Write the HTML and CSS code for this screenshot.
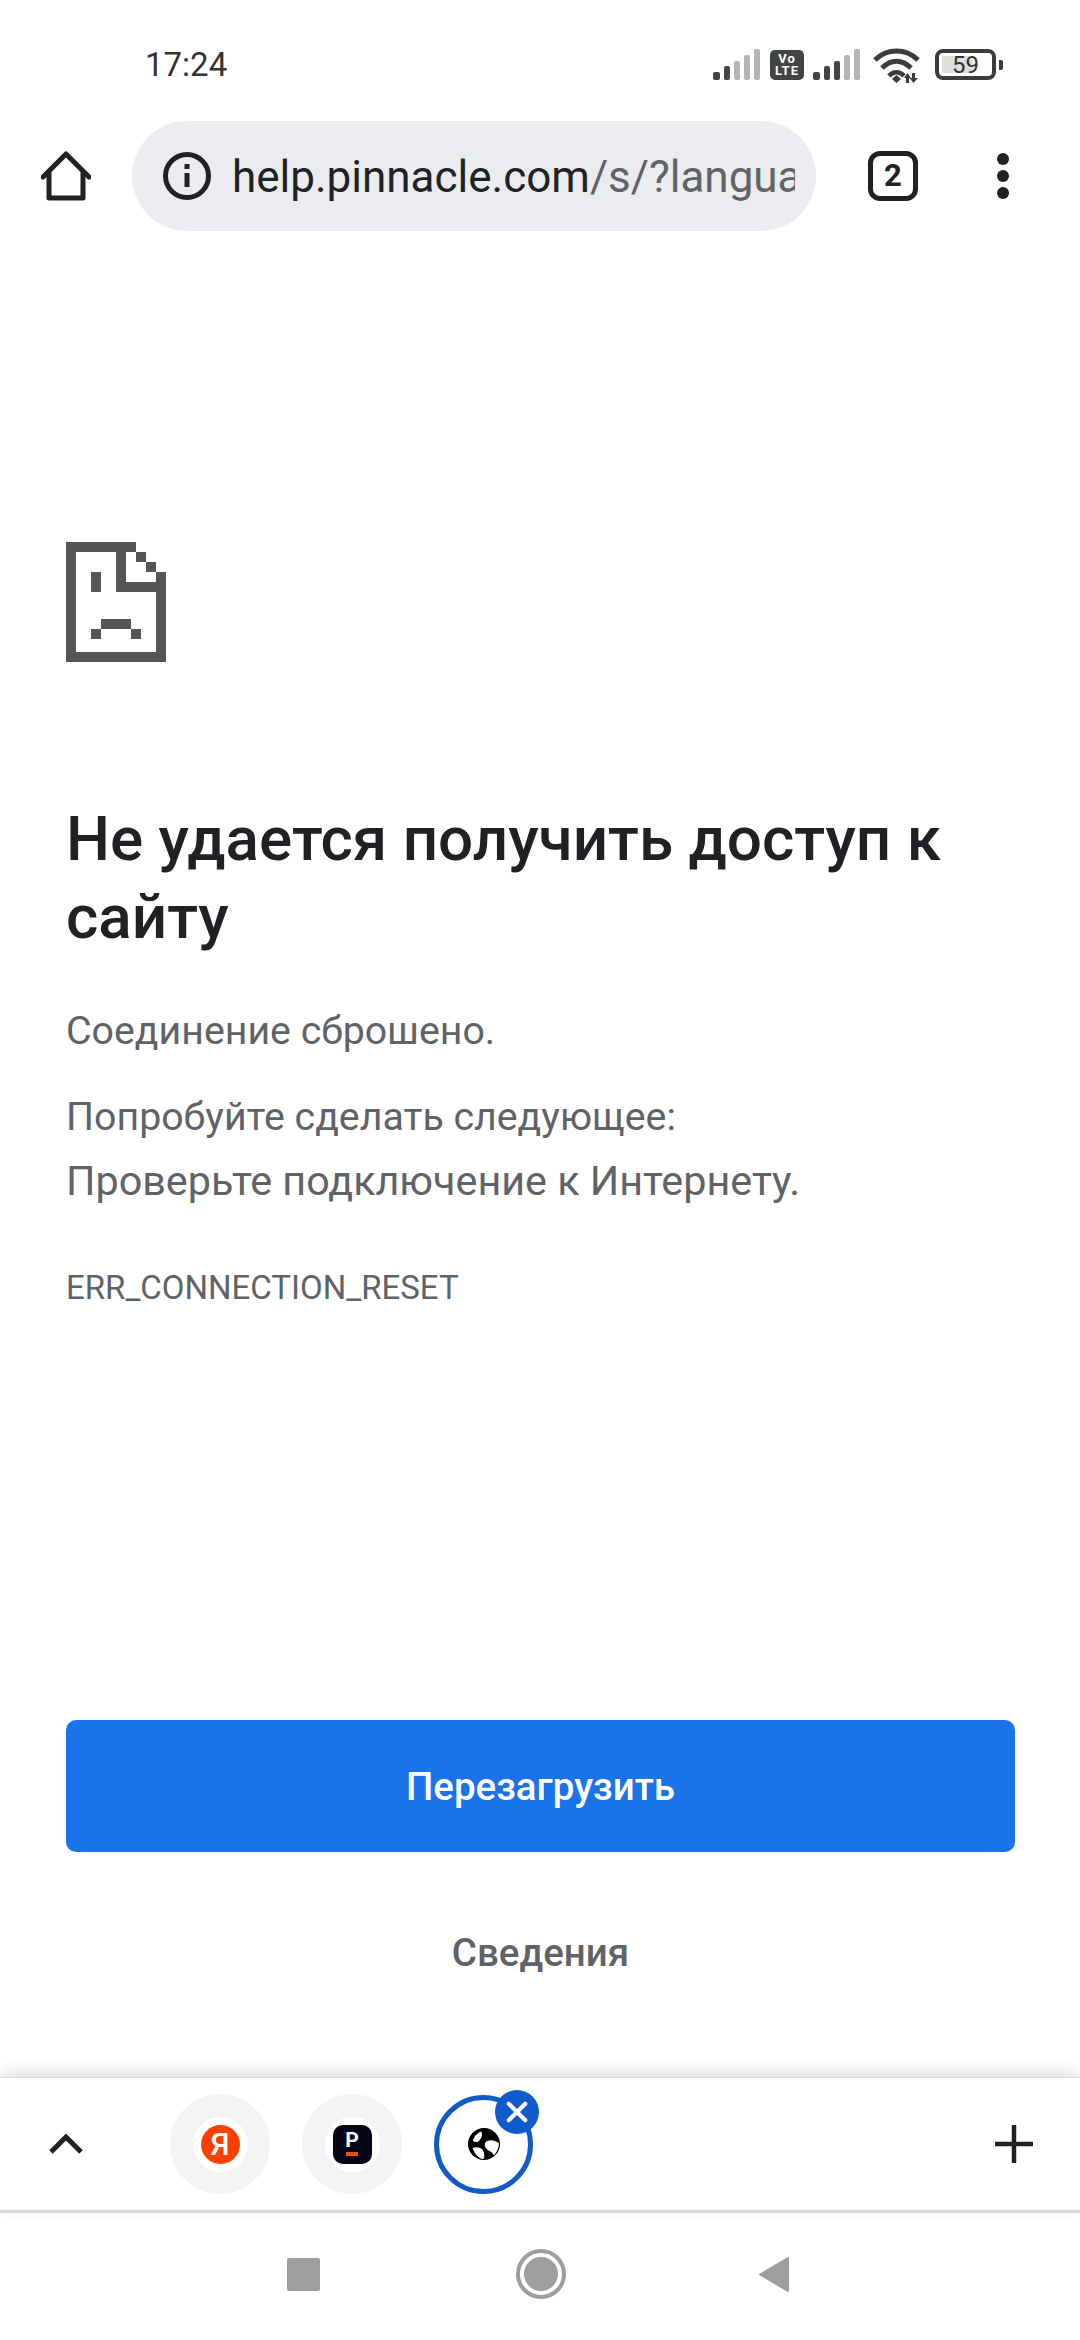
FILE: index.html
```html
<!DOCTYPE html>
<html lang="ru">

<head>
    <meta charset="UTF-8">
    <meta name="viewport" content="width=device-width, initial-scale=1.0">
    <title>help.pinnacle.com</title>
    <link rel="stylesheet" href="styles.css">
</head>

<body>
    <div class="phone">
        <div class="status-bar">
            <span class="time">17:24</span>
            <div class="status-icons">
                <svg class="signal" viewBox="0 0 48 31">
                    <rect x="0" y="23" width="7" height="8" rx="2" fill="#444"/>
                    <rect x="11" y="17" width="6" height="14" rx="2" fill="#444"/>
                    <rect x="21" y="12" width="6" height="19" rx="2" fill="#b5b5b5"/>
                    <rect x="31" y="6" width="6" height="25" rx="2" fill="#b5b5b5"/>
                    <rect x="41" y="0" width="6" height="31" rx="2" fill="#b5b5b5"/>
                </svg>
                <div class="volte">Vo<br>LTE</div>
                <svg class="signal" viewBox="0 0 48 31">
                    <rect x="0" y="23" width="7" height="8" rx="2" fill="#444"/>
                    <rect x="11" y="17" width="6" height="14" rx="2" fill="#444"/>
                    <rect x="21" y="12" width="6" height="19" rx="2" fill="#444"/>
                    <rect x="31" y="6" width="6" height="25" rx="2" fill="#b5b5b5"/>
                    <rect x="41" y="0" width="6" height="31" rx="2" fill="#b5b5b5"/>
                </svg>
                <svg class="wifi" viewBox="0 0 48 36" fill="none" stroke="#3c3c3c" stroke-width="5">
                    <path d="M2 13 C14 1 33 1 45 13"/>
                    <path d="M9 21 C18 12 29 12 38 21"/>
                    <path d="M16 29 C20 24 27 24 31 29" stroke-width="4.500"/>
                    <path d="M23.500 28 L28 32 L23.500 36 L19 32 Z" fill="#3c3c3c" stroke="none"/>
                    <path d="M34.500 26 L38 31 H36 V36 H33 V31 H31 Z" fill="#3c3c3c" stroke="none"/>
                    <path d="M39 26 H42 V31 H45 L40.500 36 L36.500 31 H39 Z" fill="#3c3c3c" stroke="none"/>
                </svg>
                <div class="battery">
                    <div class="battery-body">
                        <div class="battery-fill"></div>
                        <span class="battery-num">59</span>
                    </div>
                    <div class="battery-nub"></div>
                </div>
            </div>
        </div>

        <div class="toolbar">
            <svg class="home-icon" viewBox="0 0 50 50" fill="none" stroke="#202124" stroke-width="5" stroke-linejoin="round" stroke-linecap="round">
                <path d="M2 26 L25 3 L48 26"/>
                <path d="M8 22 V47 H42 V22"/>
            </svg>
            <div class="url-bar">
                <svg class="info-icon" viewBox="0 0 48 48">
                    <circle cx="24" cy="24" r="21.500" fill="none" stroke="#202124" stroke-width="5"/>
                    <rect x="21.500" y="21" width="5" height="14" fill="#202124"/>
                    <rect x="21.500" y="12" width="5" height="5" fill="#202124"/>
                </svg>
                <div class="url-text">help.pinnacle.com<span class="url-path">/s/?langua</span></div>
            </div>
            <div class="tab-count">2</div>
            <div class="menu-dots">
                <span></span>
                <span></span>
                <span></span>
            </div>
        </div>

        <div class="content">
            <svg class="sad-icon" viewBox="0 0 100 120" shape-rendering="crispEdges" fill="#555">
                <rect x="0" y="0" width="70" height="10"/>
                <rect x="0" y="0" width="10" height="120"/>
                <rect x="0" y="110" width="100" height="10"/>
                <rect x="90" y="30" width="10" height="90"/>
                <rect x="70" y="10" width="10" height="10"/>
                <rect x="80" y="20" width="10" height="10"/>
                <rect x="50" y="10" width="10" height="40"/>
                <rect x="50" y="40" width="50" height="10"/>
                <rect x="25" y="30" width="10" height="20"/>
                <rect x="35" y="77" width="30" height="10"/>
                <rect x="25" y="87" width="10" height="10"/>
                <rect x="65" y="87" width="10" height="10"/>
            </svg>

            <h1>Не удается получить доступ к сайту</h1>
            <p class="reason">Соединение сброшено.</p>
            <p class="hint">Попробуйте сделать следующее:</p>
            <p class="suggestion">Проверьте подключение к Интернету.</p>
            <p class="error-code">ERR_CONNECTION_RESET</p>

            <button class="reload-btn" type="button">Перезагрузить</button>
            <div class="details">Сведения</div>
        </div>

        <div class="tabs-strip">
            <svg class="chevron" viewBox="0 0 34 20" fill="none" stroke="#202124" stroke-width="5">
                <path d="M2 18 L17 3 L32 18"/>
            </svg>
            <div class="tab-circle">
                <div class="tab-favicon">
                    <div class="ya-logo">Я</div>
                </div>
            </div>
            <div class="tab-circle">
                <div class="tab-favicon">
                    <div class="pin-logo">
                        <span class="pin-letter">P</span>
                        <span class="pin-dash"></span>
                    </div>
                </div>
            </div>
            <div class="tab-active">
                <svg class="globe" viewBox="0 0 90 90">
                    <circle cx="45" cy="45" r="45" fill="#000"/>
                    <path d="M14 36 C16 24 27 13 37 10 C42 19 38 29 32 35 C27 41 20 41 14 36 Z" fill="#fff"/>
                    <path d="M55 36 C65 32 77 35 87 43 C87 55 81 69 73 77 C69 65 55 65 49 55 C45 47 47 40 55 36 Z" fill="#fff"/>
                    <path d="M13 57 C23 51 35 55 41 61 C47 69 47 81 43 88 C29 85 19 73 13 57 Z" fill="#fff"/>
                </svg>
                <div class="tab-close">
                    <svg viewBox="0 0 24 24" fill="none" stroke="#fff" stroke-width="4.500" stroke-linecap="round">
                        <path d="M3 3 L21 21 M21 3 L3 21"/>
                    </svg>
                </div>
            </div>
            <svg class="plus" viewBox="0 0 40 40" stroke="#202124" stroke-width="4.500">
                <path d="M20 1 V39 M1 20 H39"/>
            </svg>
        </div>

        <div class="nav-bar">
            <div class="nav-square"></div>
            <div class="nav-home">
                <div class="nav-home-dot"></div>
            </div>
            <svg class="nav-back" viewBox="0 0 32 37">
                <path d="M30 2 V35 L2 18.500 Z" fill="#9e9e9e" stroke="#9e9e9e" stroke-width="2" stroke-linejoin="round"/>
            </svg>
        </div>
    </div>
</body>

</html>
```

FILE: styles.css
```css
* {
    padding: 0;
    margin: 0;
    box-sizing: border-box;
    font-family: 'Roboto', sans-serif;
}

body {
    background: #ffffff;
}

.phone {
    width: 1080px;
    height: 2340px;
    display: flex;
    flex-direction: column;
    overflow: hidden;
}

/* status bar */
.status-bar {
    height: 121px;
    padding: 45px 77px 0 145px;
    display: flex;
    justify-content: space-between;
    align-items: flex-start;
}

.time {
    font-size: 33px;
    line-height: 40px;
    color: #333;
}

.status-icons {
    display: flex;
    align-items: flex-start;
    padding-top: 4px;
}

.signal {
    width: 48px;
    height: 31px;
}

.volte {
    width: 34px;
    height: 30px;
    margin: 1px 9px 0 9px;
    background: #444;
    border-radius: 5px;
    color: #fff;
    font-size: 13px;
    line-height: 12px;
    letter-spacing: 1px;
    font-weight: 700;
    text-align: center;
    padding-top: 3px;
}

.wifi {
    width: 48px;
    height: 36px;
    margin: -2px 0 0 12px;
}

.battery {
    display: flex;
    align-items: center;
    margin-left: 14px;
}

.battery-body {
    position: relative;
    width: 61px;
    height: 31px;
    border: 4px solid #3c3c3c;
    border-radius: 8px;
    display: flex;
    align-items: center;
    justify-content: center;
}

.battery-fill {
    position: absolute;
    left: 3px;
    top: 3px;
    bottom: 3px;
    width: 31px;
    background: #dedede;
    border-radius: 2px;
}

.battery-num {
    position: relative;
    font-size: 24px;
    color: #333;
}

.battery-nub {
    width: 4px;
    height: 10px;
    margin-left: 3px;
    background: #3c3c3c;
    border-radius: 0 2px 2px 0;
}

/* toolbar */
.toolbar {
    height: 110px;
    display: flex;
    align-items: center;
}

.home-icon {
    width: 50px;
    height: 50px;
    margin-left: 41px;
}

.url-bar {
    width: 684px;
    height: 110px;
    margin-left: 41px;
    padding: 0 21px 0 31px;
    background: #ebecf0;
    border-radius: 55px;
    display: flex;
    align-items: center;
}

.info-icon {
    width: 48px;
    height: 48px;
    flex-shrink: 0;
}

.url-text {
    margin-left: 21px;
    padding-top: 2px;
    font-size: 44px;
    color: #202124;
    white-space: nowrap;
    overflow: hidden;
}

.url-path {
    color: #5f6368;
}

.tab-count {
    width: 50px;
    height: 50px;
    margin-left: 52px;
    border: 5px solid #202124;
    border-radius: 12px;
    font-size: 31px;
    line-height: 40px;
    font-weight: 700;
    text-align: center;
    color: #202124;
}

.menu-dots {
    margin-left: 79px;
    display: flex;
    flex-direction: column;
    gap: 5px;
}

.menu-dots span {
    width: 12px;
    height: 12px;
    background: #202124;
    border-radius: 50%;
}

/* error page */
.content {
    flex: 1;
    padding: 311px 65px 0 66px;
    display: flex;
    flex-direction: column;
}

.sad-icon {
    width: 100px;
    height: 120px;
}

h1 {
    margin-top: 138px;
    font-size: 62px;
    line-height: 78px;
    font-weight: 500;
    color: #202124;
}

.reason,
.hint,
.suggestion {
    font-size: 39.300px;
    line-height: 64px;
    color: #5f6368;
}

.suggestion {
    font-size: 41.300px;
}

.reason {
    margin-top: 43px;
}

.hint {
    margin-top: 22px;
}

.error-code {
    margin-top: 54px;
    font-size: 33px;
    line-height: 42px;
    color: #5f6368;
}

.reload-btn {
    width: 949px;
    height: 132px;
    margin-top: 411px;
    background-color: #1a73e8;
    color: #fff;
    border: none;
    border-radius: 10px;
    font-size: 38.500px;
    font-weight: 500;
}

.details {
    margin-top: 80px;
    font-size: 38.500px;
    line-height: 42px;
    font-weight: 500;
    text-align: center;
    color: #5f6368;
}

/* tabs strip */
.tabs-strip {
    height: 136px;
    display: flex;
    align-items: center;
    box-shadow: 0 -5px 14px rgba(0, 0, 0, 0.13);
    border-top: 1px solid #dcdcdc;
    border-bottom: 3px solid #d8dad8;
    background: #fff;
}

.chevron {
    width: 34px;
    height: 20px;
    margin-left: 49px;
}

.tab-circle {
    width: 100px;
    height: 100px;
    margin-left: 87px;
    background: #f1f3f4;
    border-radius: 50%;
    display: flex;
    align-items: center;
    justify-content: center;
}

.tab-circle + .tab-circle {
    margin-left: 32px;
}

.tab-favicon {
    width: 55px;
    height: 55px;
    background: #fff;
    border-radius: 50%;
    display: flex;
    align-items: center;
    justify-content: center;
}

.ya-logo {
    width: 39px;
    height: 39px;
    background: #ff4000;
    border-radius: 50%;
    color: #fff;
    font-size: 31px;
    line-height: 39px;
    font-weight: 500;
    text-align: center;
}

.pin-logo {
    width: 39px;
    height: 39px;
    background: #040716;
    border-radius: 10px;
    display: flex;
    flex-direction: column;
    align-items: center;
}

.pin-letter {
    color: #fff;
    font-size: 21px;
    line-height: 15px;
    font-weight: 700;
    margin-top: 8px;
}

.pin-dash {
    width: 12px;
    height: 4px;
    margin-top: 4px;
    background: #ff4b12;
}

.tab-active {
    position: relative;
    width: 99px;
    height: 99px;
    margin-left: 32px;
    border: 5px solid #1259c9;
    border-radius: 50%;
    display: flex;
    align-items: center;
    justify-content: center;
}

.globe {
    width: 32px;
    height: 32px;
}

.tab-close {
    position: absolute;
    top: -10px;
    right: -11px;
    width: 44px;
    height: 44px;
    background: #0f5bcd;
    border-radius: 50%;
    display: flex;
    align-items: center;
    justify-content: center;
}

.tab-close svg {
    width: 22px;
    height: 22px;
}

.plus {
    width: 40px;
    height: 40px;
    margin-left: 461px;
}

/* android nav */
.nav-bar {
    height: 127px;
    padding-bottom: 5px;
    display: flex;
    align-items: center;
}

.nav-square {
    width: 33px;
    height: 33px;
    margin-left: 287px;
    background: #9e9e9e;
    border-radius: 2px;
}

.nav-home {
    width: 50px;
    height: 50px;
    margin-left: 196px;
    border: 4px solid #9e9e9e;
    border-radius: 50%;
    display: flex;
    align-items: center;
    justify-content: center;
}

.nav-home-dot {
    width: 34px;
    height: 34px;
    background: #9e9e9e;
    border-radius: 50%;
}

.nav-back {
    width: 32px;
    height: 37px;
    margin-left: 192px;
}
```
